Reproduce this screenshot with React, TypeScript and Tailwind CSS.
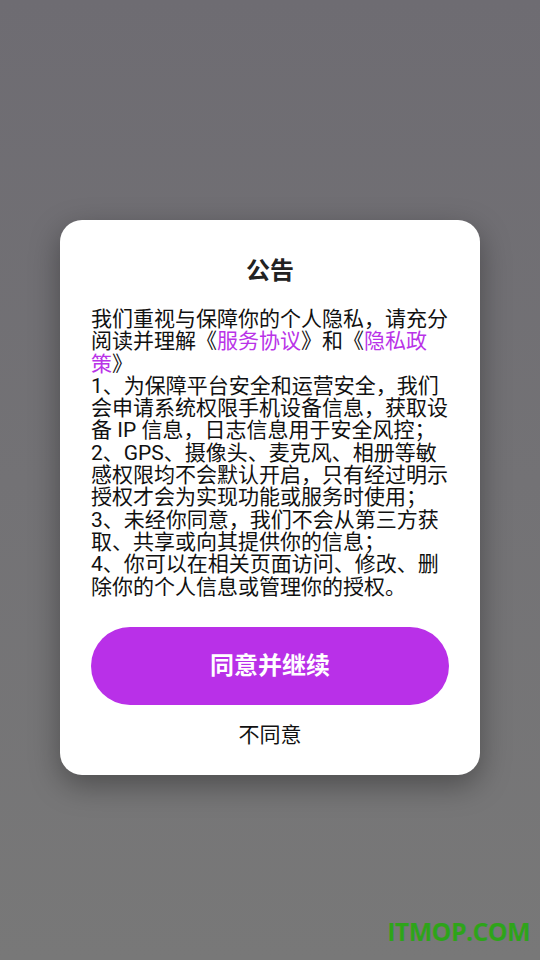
const App = () => {
  return (
    <div
      className="relative flex flex-col items-center w-[540px] h-[960px] overflow-hidden bg-gradient-to-b from-[#6e6c72] to-[#787878]"
      style={{ fontFamily: "Roboto, 'Noto Sans CJK SC', sans-serif" }}
    >
      <div className="mt-[220px] w-[420px] rounded-[22px] bg-white px-[31px] pt-[36px] pb-[25px] shadow-[0_10px_30px_rgba(0,0,0,0.35)]">
        <h1 className="text-center text-[24px] leading-[30px] font-bold text-[#222]">公告</h1>
        <p className="mt-[22px] text-[21px] leading-[22.3px] text-[#111]">
          我们重视与保障你的个人隐私，请充分阅读并理解《<span className="text-[#b933e8]">服务协议</span>》和《<span className="text-[#b933e8]">隐私政策</span>》
          <br />
          1、为保障平台安全和运营安全，我们会申请系统权限手机设备信息，获取设备 IP 信息，日志信息用于安全风控；
          <br />
          2、GPS、摄像头、麦克风、相册等敏感权限均不会默认开启，只有经过明示授权才会为实现功能或服务时使用；
          <br />
          3、未经你同意，我们不会从第三方获取、共享或向其提供你的信息；
          <br />
          4、你可以在相关页面访问、修改、删除你的个人信息或管理你的授权。
        </p>
        <button className="mt-[29px] block w-full h-[78px] rounded-full bg-[#b930e8] text-white text-[24px] font-bold">
          同意并继续
        </button>
        <div className="mt-[15px] text-center text-[21px] leading-[30px] text-[#111]">不同意</div>
      </div>
      <div
        className="absolute right-[10px] bottom-[10px] text-[25px] font-bold text-[#2ea41a] tracking-tight"
        style={{ fontFamily: "'Open Sans', sans-serif" }}
      >
        ITMOP.COM
      </div>
    </div>
  );
};

export default App;
